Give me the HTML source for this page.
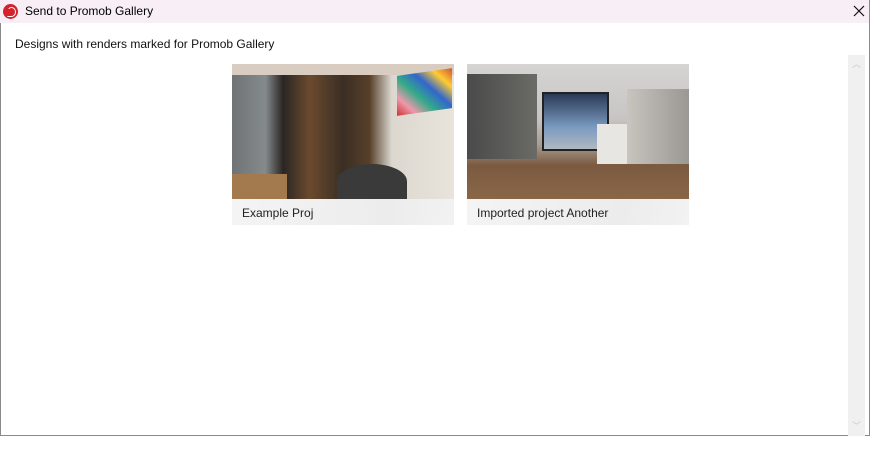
<!DOCTYPE html>
<html><head><style>
body{margin:0;width:880px;height:451px;background:#fff;font-family:"Liberation Sans",sans-serif;position:relative;overflow:hidden}
.win{position:absolute;left:0;top:0;width:868px;height:435px;border:1px solid #8a8a8a;border-top:none;background:#fff}
.title{position:absolute;left:0;top:0;width:869px;height:23px;background:#f7eef6}
.title span{position:absolute;left:25px;top:4px;font-size:12px;color:#000}
.logo{position:absolute;left:3px;top:4px;width:15px;height:15px;border-radius:50%;background:#d4232b}
.logo:after{content:"";position:absolute;left:4px;top:3px;width:7px;height:8px;border:1.5px solid #fff;border-radius:50% 50% 50% 0;border-left-color:transparent}
.x{position:absolute;left:853px;top:5px}
.sub{position:absolute;left:15px;top:37px;font-size:12px;color:#111}
.sb{position:absolute;left:848px;top:55px;width:17px;height:381px;background:#f0f0f0}
.sb i{position:absolute;left:4px;font-style:normal;font-size:9px;color:#c8c8c8}
.card{position:absolute;top:64px;width:222px;height:161px;overflow:hidden}
.img{position:absolute;left:0;top:0;width:222px;height:135px}
.cap{position:absolute;left:0;top:135px;width:222px;height:26px;background:linear-gradient(100deg,#f4f4f4,#ececec 70%,#f2f2f2)}
.cap span{position:absolute;left:10px;top:7px;font-size:12px;color:#222}
</style></head><body>
<div class="win"></div>
<div class="title"><div class="logo"></div><span>Send to Promob Gallery</span>
<svg class="x" width="12" height="12" viewBox="0 0 12 12"><path d="M1 1L11 11M11 1L1 11" stroke="#111" stroke-width="1.2"/></svg></div>
<div class="sub">Designs with renders marked for Promob Gallery</div>
<div class="sb"><i style="top:2px">︿</i><i style="bottom:4px">﹀</i></div>
<div class="card" style="left:232px">
 <div class="img" style="background:linear-gradient(180deg,#d9ccc0 0,#d9ccc0 8%,transparent 8%),linear-gradient(90deg,#6f7375 0,#858a8c 15%,#2a2624 23%,#6b4a2e 35%,#3a2e24 50%,#58402a 62%,#dcd8d0 72%,#e8e4dc 100%)"></div>
 <div style="position:absolute;left:165px;top:8px;width:55px;height:40px;background:linear-gradient(45deg,#c33,#e9a,#3a8,#36c,#fc3,#c53);transform:skewY(-8deg)"></div>
 <div style="position:absolute;left:105px;top:100px;width:70px;height:35px;border-radius:50% 50% 0 0;background:#3a3a3a"></div>
 <div style="position:absolute;left:0;top:110px;width:55px;height:25px;background:#a27a4e"></div>
 <div class="cap"><span>Example Proj</span></div></div>
<div class="card" style="left:467px">
 <div class="img" style="background:linear-gradient(180deg,#d6d4d2 0,#c8c6c4 40%,#a89c90 60%,#7a5a40 75%,#8a6648 100%)"></div>
 <div style="position:absolute;left:0;top:10px;width:70px;height:85px;background:linear-gradient(90deg,#4a4a4a,#6a6a66)"></div>
 <div style="position:absolute;left:75px;top:28px;width:63px;height:55px;background:linear-gradient(180deg,#2a3a55,#7a9ac0 60%,#b0b8c0);border:2px solid #222"></div>
 <div style="position:absolute;left:160px;top:25px;width:62px;height:75px;background:linear-gradient(90deg,#c8c4be,#9a9894)"></div>
 <div style="position:absolute;left:130px;top:60px;width:30px;height:40px;background:#e8e6e2"></div>
 <div class="cap"><span>Imported project Another</span></div></div>
</body></html>
